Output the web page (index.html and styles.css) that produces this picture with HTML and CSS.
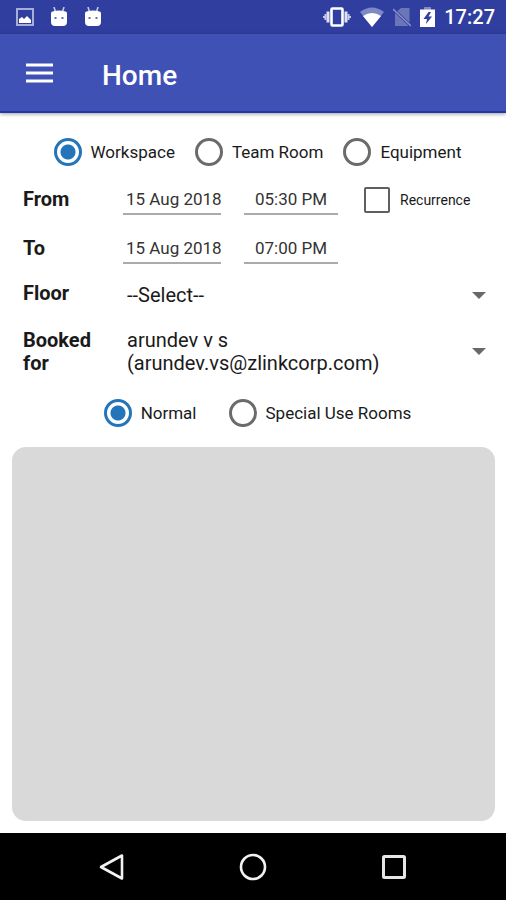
FILE: index.html
```html
<!DOCTYPE html>
<html lang="en">
<head>
<meta charset="utf-8">
<meta name="viewport" content="width=device-width, initial-scale=1">
<title>Home</title>
<link rel="stylesheet" href="styles.css">
</head>
<body>
<div class="status">
  <div class="status-group status-left">
    <svg viewBox="0 0 18 18" width="18" height="18"><rect x="1" y="1" width="16" height="16" fill="none" stroke="#b4badf" stroke-width="1.8"/><path d="M3 15v-4l3-2 2 2 3-3 4 4v3z" fill="#fff"/></svg>
    <svg viewBox="0 0 18 20" width="18" height="20"><path d="M4 0l1.5 5M14 0l-1.5 5" stroke="#c3c8e8" stroke-width="1.6"/><path d="M2.500 4.500q6.500-2 13 0 1.500 0 1.500 2v8.500q0 4-4 4h-8q-4 0-4-4V6.500q0-2 1.500-2z" fill="#fff"/><path d="M4.500 11h2M11.500 11h2" stroke="#303f9f" stroke-width="1.600"/></svg>
    <svg viewBox="0 0 18 20" width="18" height="20"><path d="M4 0l1.500 5M14 0l-1.500 5" stroke="#c3c8e8" stroke-width="1.600"/><path d="M2.500 4.500q6.500-2 13 0 1.500 0 1.500 2v8.500q0 4-4 4h-8q-4 0-4-4V6.500q0-2 1.500-2z" fill="#fff"/><path d="M4.500 11h2M11.500 11h2" stroke="#303f9f" stroke-width="1.600"/></svg>
  </div>
  <div class="status-group status-right">
    <svg viewBox="0 0 28 20" width="28" height="20"><rect x="8.500" y="1.500" width="11" height="17" rx="1" fill="none" stroke="#fff" stroke-width="2.600"/><path d="M5 4.500v11M23 4.500v11" stroke="#dfe2f3" stroke-width="3"/><path d="M2.500 7v6M25.500 7v6" stroke="#c3c8e8" stroke-width="2"/><path d="M1 9v2M27 9v2" stroke="#c3c8e8" stroke-width="2"/></svg>
    <svg viewBox="0 0 24 20" width="24" height="20"><path d="M0 5Q12-4 24 5L12 20z" fill="#7f89c6"/><path d="M3 9Q12 3 21 9L12 20z" fill="#fff"/></svg>
    <svg viewBox="0 0 18 20" width="18" height="20"><path d="M2 6l6-5h8.500v18H2z" fill="#6c76b7"/><path d="M0 2l18 17" stroke="#303f9f" stroke-width="3"/><path d="M0 2l18 17" stroke="#8d95cb" stroke-width="1.300"/></svg>
    <svg viewBox="0 0 15 20" width="15" height="20"><path d="M4 0h7v3H4z" fill="#7f89c6"/><path d="M0 2.500h15V20H0z" fill="#fff"/><path d="M8.500 5L3.500 12H7l-1 5 6-7.500H8.500L11 5z" fill="#303f9f"/></svg>
    <span class="clock">17:27</span>
  </div>
</div>

<header class="appbar">
  <button class="menu" type="button" aria-label="Open menu">
    <svg viewBox="0 0 28 22" width="28" height="22"><path d="M0 3h27M0 11h27M0 19h27" stroke="#fff" stroke-width="3"/></svg>
  </button>
  <h1>Home</h1>
</header>

<main>
  <form class="form">
    <div class="choices choices-type" role="radiogroup" aria-label="Booking type">
      <label class="choice"><input type="radio" name="type" checked>Workspace</label>
      <label class="choice"><input type="radio" name="type">Team Room</label>
      <label class="choice"><input type="radio" name="type">Equipment</label>
    </div>

    <div class="row">
      <label class="name" for="from-date">From</label>
      <div class="fields">
        <input class="line date" id="from-date" type="text" value="15 Aug 2018">
        <input class="line time" type="text" value="05:30 PM" aria-label="From time">
        <label class="recur"><input type="checkbox">Recurrence</label>
      </div>
    </div>
    <div class="row">
      <label class="name" for="to-date">To</label>
      <div class="fields">
        <input class="line date" id="to-date" type="text" value="15 Aug 2018">
        <input class="line time" type="text" value="07:00 PM" aria-label="To time">
      </div>
    </div>
    <div class="row row-floor">
      <label class="name" for="floor">Floor</label>
      <div class="picker">
        <select id="floor"><option>--Select--</option></select>
        <svg class="caret" viewBox="0 0 14 8" width="14" height="8"><path d="M0 0h14L7 7z" fill="#696969"/></svg>
      </div>
    </div>
    <div class="row row-booked">
      <label class="name" for="booked">Booked for</label>
      <div class="picker">
        <select id="booked"><option>arundev v s (arundev.vs@zlinkcorp.com)</option></select>
        <svg class="caret" viewBox="0 0 14 8" width="14" height="8"><path d="M0 0h14L7 7z" fill="#696969"/></svg>
      </div>
    </div>

    <div class="choices choices-room" role="radiogroup" aria-label="Room type">
      <label class="choice"><input type="radio" name="room" checked>Normal</label>
      <label class="choice"><input type="radio" name="room">Special Use Rooms</label>
    </div>
  </form>
  <section class="panel" aria-label="Available rooms"></section>
</main>

<nav class="sysnav">
  <button type="button" aria-label="Back"><svg viewBox="0 0 28 28" width="28" height="28"><path d="M24 2.500v23L3 14z" fill="none" stroke="#f2f2f2" stroke-width="2.600" stroke-linejoin="round"/></svg></button>
  <button type="button" aria-label="Home screen"><svg viewBox="0 0 28 28" width="28" height="28"><circle cx="14" cy="14" r="12" fill="none" stroke="#f2f2f2" stroke-width="2.600"/></svg></button>
  <button type="button" aria-label="Recent apps"><svg viewBox="0 0 28 28" width="28" height="28"><rect x="3.500" y="3.500" width="21" height="21" rx="1" fill="none" stroke="#e6e6e6" stroke-width="3"/></svg></button>
</nav>
</body>
</html>
```
FILE: styles.css
```css
* { box-sizing: border-box; }

body {
  margin: 0;
  min-height: 100vh;
  display: flex;
  flex-direction: column;
  background: #fff;
  color: #1a1a1a;
  font-family: Roboto, "Liberation Sans", sans-serif;
  font-size: 17px;
}

svg { display: block; flex: none; }

button {
  border: 0;
  padding: 0;
  background: none;
}

.status {
  height: 34px;
  padding: 0 11px 0 16px;
  display: flex;
  justify-content: space-between;
  align-items: center;
  background: #303f9f;
  color: #fff;
}
.status-group { display: flex; align-items: center; }
.status-left { gap: 16px; }
.status-right { gap: 9px; }
.clock { font-size: 20px; font-weight: 500; line-height: 24px; }

.appbar {
  height: 79px;
  padding: 0 26px;
  display: flex;
  align-items: center;
  gap: 48px;
  background: #3f51b5;
  border-bottom: 2px solid #2038a4;
  box-shadow: 0 1px 4px rgba(0, 0, 0, 0.4);
  color: #fff;
}
h1 {
  margin: 0;
  padding-top: 6px;
  font-size: 28px;
  font-weight: 500;
  line-height: 32px;
}

main {
  flex: 1;
  display: flex;
  flex-direction: column;
  padding: 25px 11px 12px 12px;
}

.choices {
  display: flex;
  justify-content: center;
  padding-left: 8px;
}
.choices-type { gap: 20px; }
.choices-room { gap: 32px; }
.choice {
  display: flex;
  align-items: center;
  gap: 9px;
  line-height: 28px;
}

input[type="radio"] {
  appearance: none;
  flex: none;
  width: 28px;
  height: 28px;
  margin: 0;
  border: 3px solid #6b6b6b;
  border-radius: 50%;
}
input[type="radio"]:checked {
  border-color: #2474ba;
  background: radial-gradient(circle, #2474ba 7px, #fff 8px);
}

.row {
  display: flex;
  align-items: center;
  padding: 0 3px 0 11px;
  margin-top: 18px;
}
.name {
  flex: none;
  width: 80px;
  margin-right: 20px;
  font-size: 20px;
  font-weight: 700;
  line-height: 23px;
}
.fields { display: flex; align-items: center; }

.line {
  height: 31px;
  padding: 0 0 0 3px;
  border: 0;
  border-bottom: 2px solid #ababab;
  background: none;
  color: #333;
  font: 17px Roboto, "Liberation Sans", sans-serif;
}
.date { width: 98px; margin-right: 23px; }
.time { width: 94px; margin-right: 26px; padding: 0; text-align: center; }

.recur {
  display: flex;
  align-items: center;
  gap: 10px;
  font-size: 14px;
}
input[type="checkbox"] {
  appearance: none;
  width: 26px;
  height: 26px;
  margin: 0;
  border: 2px solid #5f5f5f;
  border-radius: 2px;
}

.row-floor { margin-top: 16px; }
.row-floor .picker { padding-top: 4px; }
.row-booked { margin-top: 22px; }

.picker {
  flex: 1;
  display: grid;
  align-items: center;
}
.picker > * { grid-area: 1 / 1; }
.caret { justify-self: end; margin-right: 6px; pointer-events: none; }
select {
  appearance: none;
  width: 100%;
  margin: 0;
  padding: 0 24px 0 4px;
  border: 0;
  background: none;
  color: #1a1a1a;
  font: 20px/23px Roboto, "Liberation Sans", sans-serif;
  white-space: normal;
}

.choices-room { margin-top: 24px; }

.panel {
  flex: 1;
  min-height: 120px;
  margin-top: 20px;
  border-radius: 14px;
  background: #d9d9d9;
}

.sysnav {
  height: 67px;
  display: flex;
  justify-content: center;
  align-items: center;
  gap: 113px;
  background: #000;
}
```
